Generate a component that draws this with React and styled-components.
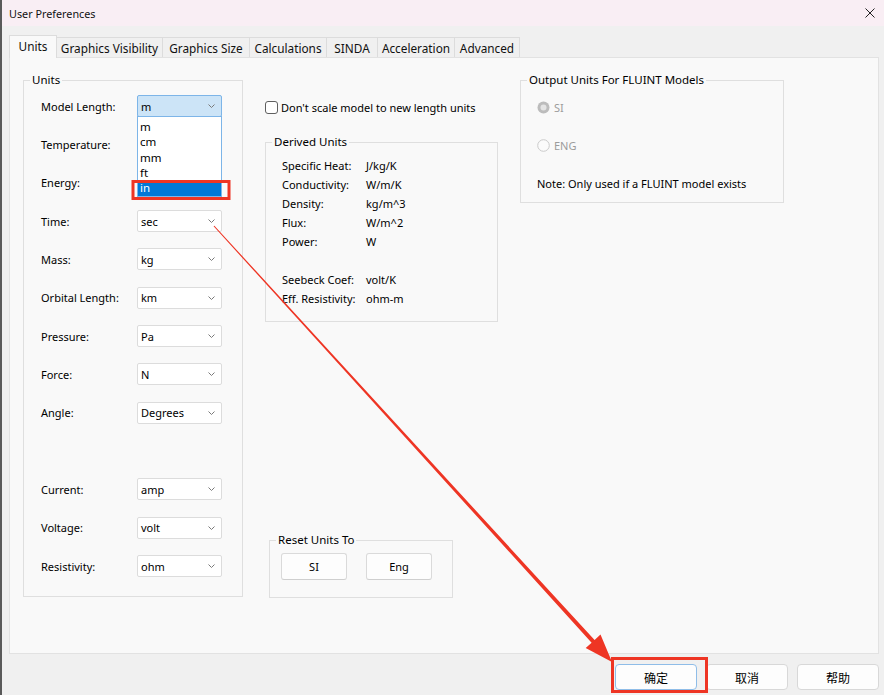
import React from "react";
import styled, { createGlobalStyle } from "styled-components";

const GlobalStyle = createGlobalStyle`
  html, body { margin: 0; padding: 0; background: #f0f0f0; }
  body {
    font-family: "Noto Sans", "Noto Sans CJK SC", sans-serif;
    font-size: 11px;
    color: #000;
  }
`;

const unitRows = [
  { label: "Model Length:", value: "m", open: true },
  { label: "Temperature:" },
  { label: "Energy:" },
  { label: "Time:", value: "sec" },
  { label: "Mass:", value: "kg" },
  { label: "Orbital Length:", value: "km" },
  { label: "Pressure:", value: "Pa" },
  { label: "Force:", value: "N" },
  { label: "Angle:", value: "Degrees" },
  null,
  { label: "Current:", value: "amp" },
  { label: "Voltage:", value: "volt" },
  { label: "Resistivity:", value: "ohm" },
];

const derived = [
  ["Specific Heat:", "J/kg/K"],
  ["Conductivity:", "W/m/K"],
  ["Density:", "kg/m^3"],
  ["Flux:", "W/m^2"],
  ["Power:", "W"],
  null,
  ["Seebeck Coef:", "volt/K"],
  ["Eff. Resistivity:", "ohm-m"],
];

const tabs = [
  { name: "Units", width: 48 },
  { name: "Graphics Visibility", width: 107 },
  { name: "Graphics Size", width: 88 },
  { name: "Calculations", width: 78 },
  { name: "SINDA", width: 52 },
  { name: "Acceleration", width: 78 },
  { name: "Advanced", width: 66 },
];

function Chevron() {
  return (
    <svg width="7" height="4" viewBox="0 0 7 4">
      <path d="M0.5 0.5 L3.5 3.5 L6.5 0.5" fill="none" stroke="#7a7a7a" strokeWidth="1" />
    </svg>
  );
}

function App() {
  return (
    <>
      <GlobalStyle />
      <Window>
        <TitleBar>
          <span>User Preferences</span>
          <svg width="10" height="10" viewBox="0 0 10 10">
            <path d="M0.5 0.5 L9.5 9.5 M9.5 0.5 L0.5 9.5" stroke="#222" strokeWidth="1" />
          </svg>
        </TitleBar>

        <TabStrip>
          {tabs.map((t, i) => (
            <Tab key={t.name} $active={i === 0} $width={t.width}>
              {t.name}
            </Tab>
          ))}
        </TabStrip>

        <Panel>
          <UnitsGroup>
            <Legend>Units</Legend>
            <UnitGrid>
              {unitRows.map((r, i) =>
                r ? (
                  <React.Fragment key={r.label}>
                    <RowLabel>{r.label}</RowLabel>
                    {r.value ? (
                      <Combo $open={r.open}>
                        <span>{r.value}</span>
                        <Chevron />
                        {r.open && (
                          <DropList>
                            {["m", "cm", "mm", "ft", "in"].map((o) => (
                              <DropItem key={o} $selected={o === "in"}>
                                {o}
                              </DropItem>
                            ))}
                          </DropList>
                        )}
                      </Combo>
                    ) : (
                      <span />
                    )}
                  </React.Fragment>
                ) : (
                  <React.Fragment key={"gap" + i}>
                    <span />
                    <span />
                  </React.Fragment>
                )
              )}
            </UnitGrid>
          </UnitsGroup>

          <MiddleColumn>
            <CheckRow>
              <CheckBox />
              <span>Don't scale model to new length units</span>
            </CheckRow>

            <DerivedGroup>
              <Legend>Derived Units</Legend>
              <DerivedGrid>
                {derived.map((d, i) =>
                  d ? (
                    <React.Fragment key={d[0]}>
                      <span>{d[0]}</span>
                      <span>{d[1]}</span>
                    </React.Fragment>
                  ) : (
                    <React.Fragment key={"g" + i}>
                      <span />
                      <span />
                    </React.Fragment>
                  )
                )}
              </DerivedGrid>
            </DerivedGroup>

            <ResetGroup>
              <Legend>Reset Units To</Legend>
              <ResetButtons>
                <SmallButton>SI</SmallButton>
                <SmallButton>Eng</SmallButton>
              </ResetButtons>
            </ResetGroup>
          </MiddleColumn>

          <OutputGroup>
            <Legend>Output Units For FLUINT Models</Legend>
            <OutputBody>
              <OutputRow $disabled>
                <svg width="13" height="13" viewBox="0 0 13 13">
                  <circle cx="6.5" cy="6.5" r="6" fill="#bcbcbc" />
                  <circle cx="6.5" cy="6.5" r="3" fill="#e4e4e4" />
                </svg>
                <span>SI</span>
              </OutputRow>
              <OutputRow $disabled>
                <svg width="13" height="13" viewBox="0 0 13 13">
                  <circle cx="6.5" cy="6.5" r="5.8" fill="#fbfbfb" stroke="#cacaca" strokeWidth="1" />
                </svg>
                <span>ENG</span>
              </OutputRow>
              <OutputRow>Note: Only used if a FLUINT model exists</OutputRow>
            </OutputBody>
          </OutputGroup>
        </Panel>

        <Footer>
          <DialogButton $primary>确定</DialogButton>
          <DialogButton>取消</DialogButton>
          <DialogButton>帮助</DialogButton>
        </Footer>

        <Annotation width="884" height="695" viewBox="0 0 884 695">
          <rect x="133" y="181.5" width="96" height="17" fill="none" stroke="#ee3524" strokeWidth="3" />
          <rect x="612.5" y="658.5" width="94" height="33" fill="none" stroke="#ee3524" strokeWidth="3" />
          <polygon
            points="213.6,226.3 591.6,642.7 585.7,648 612,662 600.5,634.6 594.6,640 214.4,225.7"
            fill="#ee3524"
          />
        </Annotation>
      </Window>
    </>
  );
}

export default App;

const Window = styled.div`
  position: relative;
  width: 884px;
  height: 695px;
  box-sizing: border-box;
  background: #f0f0f0;
  border-left: 2px solid #5a5a5a;
  display: flex;
  flex-direction: column;
  overflow: hidden;
`;

const TitleBar = styled.div`
  flex: none;
  height: 26px;
  background: #f9eef4;
  display: flex;
  align-items: center;
  justify-content: space-between;
  padding: 0 9px 0 7px;
  font-size: 10.8px;
  color: #111;
`;

const TabStrip = styled.div`
  flex: none;
  display: flex;
  align-items: flex-end;
  height: 22px;
  margin-top: 9px;
  padding-left: 7px;
  position: relative;
  z-index: 1;
`;

const Tab = styled.div`
  box-sizing: border-box;
  width: ${(p) => p.$width}px;
  height: ${(p) => (p.$active ? "23px" : "20px")};
  margin-bottom: ${(p) => (p.$active ? "-1px" : "0")};
  margin-left: -1px;
  display: flex;
  align-items: center;
  justify-content: center;
  padding-bottom: ${(p) => (p.$active ? "2px" : "0")};
  font-size: 11.8px;
  background: ${(p) => (p.$active ? "#f9f9f9" : "#f0f0f0")};
  border: 1px solid #dcdcdc;
  border-bottom: none;
  white-space: nowrap;
  color: #111;
  &:first-child {
    margin-left: 0;
  }
`;

const Panel = styled.div`
  flex: none;
  box-sizing: border-box;
  height: 597px;
  margin: 0 5px 0 7px;
  background: #f9f9f9;
  border: 1px solid #e2e2e2;
  padding: 14px 0 0 13px;
  display: flex;
  align-items: stretch;
  gap: 22px;
`;

const Group = styled.fieldset`
  margin: 0;
  padding: 0;
  min-width: 0;
  box-sizing: border-box;
  border: 1px solid #dfdfdf;
`;

const Legend = styled.legend`
  margin-left: 6px;
  padding: 0 2px;
  line-height: 16px;
  font-size: 11.5px;
`;

const UnitsGroup = styled(Group)`
  width: 220px;
  align-self: flex-start;
  padding-bottom: 11px;
`;

const UnitGrid = styled.div`
  display: grid;
  grid-template-columns: 96px 85px;
  grid-auto-rows: 38.33px;
  align-items: center;
  padding-left: 17px;
  margin-top: -1px;
`;

const RowLabel = styled.span`
  white-space: nowrap;
`;

const Combo = styled.div`
  position: relative;
  box-sizing: border-box;
  width: 85px;
  height: 22px;
  display: flex;
  align-items: center;
  justify-content: space-between;
  padding: 0 6px 0 3px;
  background: ${(p) => (p.$open ? "#cce4f7" : "#ffffff")};
  border: 1px solid ${(p) => (p.$open ? "#7db5e8" : "#dcdcdc")};
  border-radius: 2px;
`;

const DropList = styled.div`
  position: absolute;
  top: 100%;
  left: -1px;
  width: 85px;
  box-sizing: border-box;
  background: #fff;
  border: 1px solid #7db5e8;
  padding: 2px 0 0;
  z-index: 2;
`;

const DropItem = styled.div`
  height: 15.3px;
  line-height: 15.3px;
  font-size: 11.5px;
  padding-left: 2px;
  background: ${(p) => (p.$selected ? "#0078d7" : "transparent")};
  color: ${(p) => (p.$selected ? "#fff" : "#000")};
`;

const MiddleColumn = styled.div`
  width: 233px;
  display: flex;
  flex-direction: column;
  padding-top: 27px;
  height: 526px;
  box-sizing: border-box;
`;

const CheckRow = styled.div`
  display: flex;
  align-items: center;
  gap: 3px;
  height: 16px;
  white-space: nowrap;
`;

const CheckBox = styled.span`
  width: 13px;
  height: 13px;
  box-sizing: border-box;
  border: 1px solid #5f5f5f;
  border-radius: 3px;
  background: #fff;
`;

const DerivedGroup = styled(Group)`
  margin-top: 19px;
  padding-bottom: 13px;
`;

const DerivedGrid = styled.div`
  display: grid;
  grid-template-columns: 84px auto;
  grid-auto-rows: 19px;
  align-items: center;
  padding: 5.5px 0 0 16px;
  white-space: nowrap;
`;

const ResetGroup = styled(Group)`
  margin-top: auto;
  margin-left: 4px;
  width: 184px;
`;

const ResetButtons = styled.div`
  display: flex;
  gap: 19px;
  padding: 5px 0 17px 11px;
`;

const SmallButton = styled.div`
  box-sizing: border-box;
  width: 66px;
  height: 27px;
  display: flex;
  align-items: center;
  justify-content: center;
  background: #fdfdfd;
  border: 1px solid #dadada;
  border-bottom-color: #cfcfcf;
  border-radius: 3px;
`;

const OutputGroup = styled(Group)`
  width: 264px;
  align-self: flex-start;
`;

const OutputBody = styled.div`
  padding-left: 16px;
  margin-bottom: -1px;
`;

const OutputRow = styled.div`
  height: 38.33px;
  display: flex;
  align-items: center;
  gap: 4px;
  color: ${(p) => (p.$disabled ? "#9c9c9c" : "#000")};
`;

const Footer = styled.div`
  display: flex;
  justify-content: flex-end;
  gap: 9px;
  margin-top: 10px;
  padding-right: 5px;
`;

const DialogButton = styled.div`
  box-sizing: border-box;
  width: 82px;
  height: 26px;
  display: flex;
  align-items: center;
  justify-content: center;
  font-family: "Noto Sans CJK SC", sans-serif;
  font-size: 12px;
  background: #fdfdfd;
  border: 1px solid ${(p) => (p.$primary ? "#8fbde8" : "#d8d8d8")};
  border-radius: 4px;
`;

const Annotation = styled.svg`
  position: absolute;
  left: -2px;
  top: 0;
  pointer-events: none;
  z-index: 5;
`;
